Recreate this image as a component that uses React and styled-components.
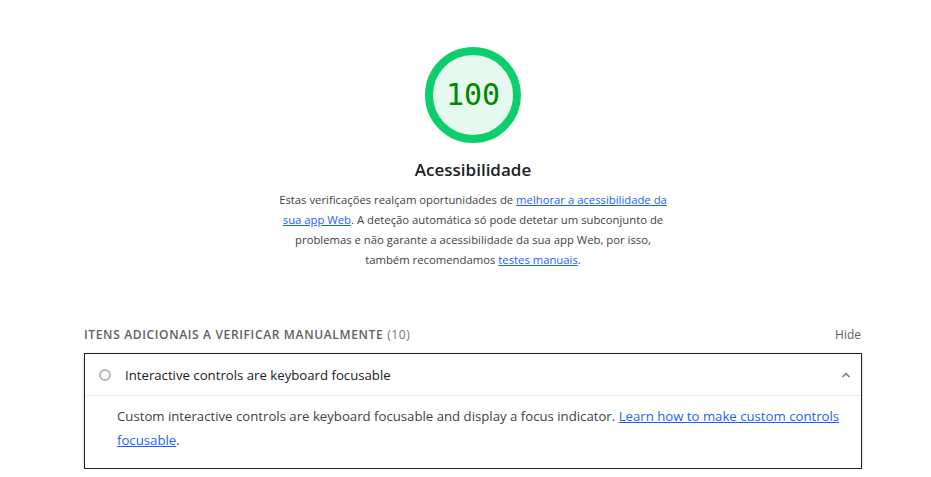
import React from "react";
import styled, { createGlobalStyle } from "styled-components";

const Global = createGlobalStyle`
  html, body { margin: 0; padding: 0; background: #fff; }
  body { font-family: "Open Sans", "Noto Sans", sans-serif; color: #212121; }
`;

const Page = styled.div`
  width: 778px;
  margin-left: 84px;
  padding-top: 47px;
  display: flex;
  flex-direction: column;
  align-items: center;
`;

const Gauge = styled.div`
  position: relative;
  width: 96px;
  height: 96px;
  display: flex;
  align-items: center;
  justify-content: center;
`;

const GaugeSvg = styled.svg`
  position: absolute;
  inset: 0;
`;

const Score = styled.span`
  position: relative;
  font-family: "DejaVu Sans Mono", "Liberation Mono", monospace;
  font-size: 30px;
  color: #008800;
  line-height: 1;
`;

const Title = styled.h2`
  margin: 15px 0 0;
  font-size: 17px;
  font-weight: 600;
  color: #212121;
  line-height: 24px;
`;

const Description = styled.p`
  margin: 8px 0 0;
  width: 396px;
  text-align: center;
  font-size: 11.3px;
  line-height: 20px;
  color: #424242;
`;

const Link = styled.a`
  color: #1a5fff;
  text-decoration: underline;
`;

const Section = styled.section`
  align-self: stretch;
  margin-top: 53px;
`;

const SectionHeader = styled.div`
  display: flex;
  justify-content: space-between;
  align-items: center;
  height: 22px;
  margin-bottom: 8px;
`;

const SectionTitle = styled.div`
  font-size: 12px;
  font-weight: 600;
  letter-spacing: 0.65px;
  text-transform: uppercase;
  color: #616161;
`;

const Count = styled.span`
  font-weight: 400;
  color: #757575;
`;

const HideButton = styled.span`
  font-size: 12px;
  color: #616161;
  margin-right: 1px;
`;

const Audit = styled.div`
  border: 1px solid #202124;
  box-shadow: 0 1px 3px rgba(0, 0, 0, 0.2);
  background: #fff;
`;

const AuditHeader = styled.div`
  display: flex;
  align-items: center;
  height: 41px;
  padding: 0 9px 0 14px;
  border-bottom: 1px solid #ebebeb;
`;

const StatusIcon = styled.span`
  width: 8px;
  height: 8px;
  border: 2px solid #b7b7b7;
  border-radius: 50%;
  flex: none;
`;

const AuditTitle = styled.span`
  flex: 1;
  margin-left: 14px;
  font-size: 13.2px;
  color: #212121;
`;

const AuditBody = styled.div`
  padding: 8px 20px 16px 32px;
  font-size: 13.2px;
  line-height: 24px;
  color: #424242;
`;

export default function App() {
  return (
    <>
      <Global />
      <Page>
        <Gauge>
          <GaugeSvg width="96" height="96" viewBox="0 0 96 96">
            <circle cx="48" cy="48" r="44" fill="#e6f9ee" stroke="#0cce6b" strokeWidth="8" />
          </GaugeSvg>
          <Score>100</Score>
        </Gauge>
        <Title>Acessibilidade</Title>
        <Description>
          Estas verificações realçam oportunidades de{" "}
          <Link href="#">melhorar a acessibilidade da sua app Web</Link>. A deteção automática só
          pode detetar um subconjunto de problemas e não garante a acessibilidade da sua app Web,
          por isso, também recomendamos <Link href="#">testes manuais</Link>.
        </Description>
        <Section>
          <SectionHeader>
            <SectionTitle>
              Itens adicionais a verificar manualmente <Count>(10)</Count>
            </SectionTitle>
            <HideButton>Hide</HideButton>
          </SectionHeader>
          <Audit>
            <AuditHeader>
              <StatusIcon />
              <AuditTitle>Interactive controls are keyboard focusable</AuditTitle>
              <svg width="12" height="12" viewBox="0 0 12 12">
                <path d="M2.5 8 L6 4.5 L9.5 8" fill="none" stroke="#757575" strokeWidth="1.5" />
              </svg>
            </AuditHeader>
            <AuditBody>
              Custom interactive controls are keyboard focusable and display a focus indicator.{" "}
              <Link href="#">Learn how to make custom controls focusable</Link>.
            </AuditBody>
          </Audit>
        </Section>
      </Page>
    </>
  );
}
